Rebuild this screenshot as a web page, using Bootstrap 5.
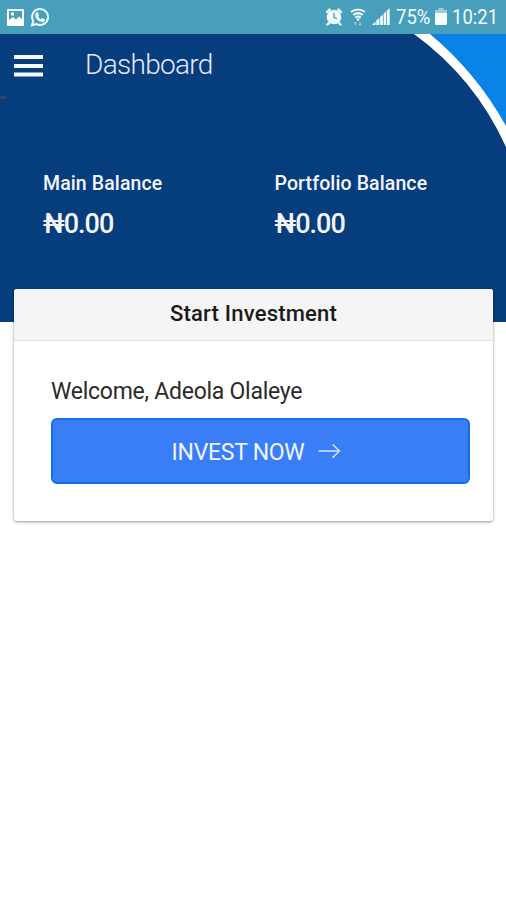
<!DOCTYPE html>
<html lang="en">
<head>
<meta charset="utf-8">
<meta name="viewport" content="width=device-width, initial-scale=1">
<title>Dashboard</title>
<link href="https://cdn.jsdelivr.net/npm/bootstrap@5.3.0/dist/css/bootstrap.min.css" rel="stylesheet">
<style>
body{font-family:Roboto,"Noto Sans",sans-serif;background:#fff;min-height:900px;overflow:hidden}
svg{display:block;flex:none}
.status{height:34px;background:#489fbc;color:#f3fbfd;padding:0 8px 0 7px}
.status svg.picture{margin-top:1px}
.status-text{font-size:21px;line-height:36px;white-space:nowrap}
.status-pct{width:34px;margin-left:6px}
.status-time{width:46px;margin-left:5px}
.wifi{margin-left:7px}
.signal{margin-left:6px}
.battery{margin-left:5px}
.squeeze{display:inline-block;transform-origin:left center;transform:scaleX(.88)}
.hero{height:288px;background:#063d7c;color:#f4f5ff}
.arc{top:0;right:0}
.topbar{height:62px;padding-left:14px}
.menu-btn{padding:0;border:0;background:none}
.title{font-size:28px;font-weight:300;line-height:60px;letter-spacing:-.7px;margin-left:42px;color:#e6e6fb}
.speck{left:0;top:62px;width:6px;height:3px;background:#2c4668}
.balances{padding:77px 0 0 43px}
.balance{width:232px}
.balance-label{font-size:19.500px;font-weight:500;line-height:22px;letter-spacing:.11px}
.balance-value{font-size:27px;font-weight:500;line-height:32px;letter-spacing:-1px;margin-top:13px}
.invest{margin:-33px 13px 0 14px;border:0;border-radius:3px;box-shadow:0 1px 3px rgba(0,0,0,.42);height:232px}
.invest .card-header{height:52px;background:#f5f5f5;border-bottom:1px solid #e0e0e0;font-size:22px;font-weight:500;line-height:50px;letter-spacing:.2px;padding:0;color:#1b1b1b;border-radius:3px 3px 0 0}
.invest .card-body{padding:36px 23px 0 37px}
.welcome{font-size:23px;line-height:30px;letter-spacing:-.26px;color:#2b2b2b;margin-bottom:11px}
.invest-btn{height:66px;background:#397ef6;border:2px solid #126ee9;border-radius:6px;font-size:23px;letter-spacing:-.27px;color:#f0f5ff;gap:14px}
</style>
</head>
<body>
<div class="status d-flex align-items-center">
  <svg class="picture" width="18" height="18" viewBox="0 0 18 18"><path fill="#fff" fill-rule="evenodd" d="M1 0h15q1 0 1 1v15q0 1-1 1H1q-1 0-1-1V1q0-1 1-1zM2 2v9l4-3 3 2.500 3-3 3 2.500V2zM4 3.500h3v3H4z"/></svg>
  <svg class="ms-1 me-auto" width="21" height="20" viewBox="0 0 21 20"><path fill="none" stroke="#eefaff" stroke-width="2" d="M3 18.200l1.200-4.200A8 8 0 1 1 7.300 17z"/><path fill="#eefaff" d="M7.200 5.500l1.600-.3 1.300 3-1 1.200q1 2 3 2.900l1.300-1.200 2.700 1.400q-.3 2.800-3.100 2.500-4.700-.6-6.700-5.600-.6-2.400.9-3.900z"/></svg>
  <svg width="18" height="18" viewBox="0 0 18 18"><g fill="none" stroke="#f3fbfd" stroke-width="2.400" stroke-linecap="round"><path d="M2 4l2.500-2.400M16 4l-2.500-2.400M4 15l-1.500 1.500M14 15l1.500 1.500"/></g><circle cx="9" cy="9" r="7.300" fill="#f3fbfd"/><path d="M9 5v4.500l3 1.200" fill="none" stroke="#489fbc" stroke-width="1.400"/></svg>
  <svg class="wifi" width="16" height="18" viewBox="0 0 16 18"><g fill="none" stroke="#f3fbfd" stroke-width="2"><path d="M1 4q7-5 14 0M3.200 7q4.800-3.700 9.600 0M5.200 9.500q2.800-2 5.600 0"/></g><path d="M6 10.500h4l-2 3z" fill="#f3fbfd"/><path d="M5.300 17.500v-3M4.200 15.500l1.100-1.200 1.100 1.200M10 14v3M8.900 16l1.100 1.200 1.100-1.200" fill="none" stroke="#b0d7e4"/></svg>
  <svg class="signal" width="18" height="18" viewBox="0 0 18 18"><path fill="#f3fbfd" d="M0 17l3.500-3.500V17zM4.300 12.500l3-2.500v7h-3zM8.100 9l2.800-2.500V17H8.100zM11.700 5.500l2.300-2V17h-2.300zM14.800 2.500l2.900-2.300V17h-2.900z"/></svg>
  <div class="status-text status-pct"><span class="squeeze">75%</span></div>
  <svg class="battery" width="12" height="18" viewBox="0 0 12 18"><path fill="#9bcbdc" d="M3.500 0h5v2H12v4H0V2h3.500z"/><path fill="#f6fdfe" d="M0 5h12v11q0 1-1 1H1q-1 0-1-1z"/></svg>
  <div class="status-text status-time"><span class="squeeze">10:21</span></div>
</div>

<header class="hero position-relative">
  <svg class="arc position-absolute" width="96" height="114" viewBox="0 0 96 114"><path fill="#fff" d="M4 0A285 285 0 0 1 96 113V0z"/><path fill="#0984e6" d="M20 0A325 325 0 0 1 96 92V0z"/></svg>
  <div class="speck position-absolute"></div>
  <div class="topbar d-flex align-items-center">
    <button class="menu-btn" type="button" aria-label="Open menu"><svg width="29" height="23" viewBox="0 0 29 23"><path fill="#f8f8ff" d="M0 1h29v4H0zM0 10h29v4H0zM0 18.500h29v4H0z"/></svg></button>
    <h1 class="title mb-0">Dashboard</h1>
  </div>
  <div class="balances d-flex">
    <div class="balance"><div class="balance-label">Main Balance</div><div class="balance-value">₦0.00</div></div>
    <div class="balance"><div class="balance-label">Portfolio Balance</div><div class="balance-value">₦0.00</div></div>
  </div>
</header>

<main class="card invest position-relative">
  <div class="card-header text-center">Start Investment</div>
  <div class="card-body">
    <p class="welcome">Welcome, Adeola Olaleye</p>
    <button type="button" class="btn invest-btn w-100 d-flex align-items-center justify-content-center p-0 pe-2 pt-1">INVEST NOW
      <svg class="mb-1" width="23" height="16" viewBox="0 0 23 16"><path fill="none" stroke="#d6e5ff" stroke-width="1.500" stroke-linecap="round" stroke-linejoin="round" d="M1 8h20M15 1.800L21.500 8 15 14.200"/></svg>
    </button>
  </div>
</main>
<script src="https://cdn.jsdelivr.net/npm/bootstrap@5.3.0/dist/js/bootstrap.bundle.min.js"></script>
</body>
</html>
